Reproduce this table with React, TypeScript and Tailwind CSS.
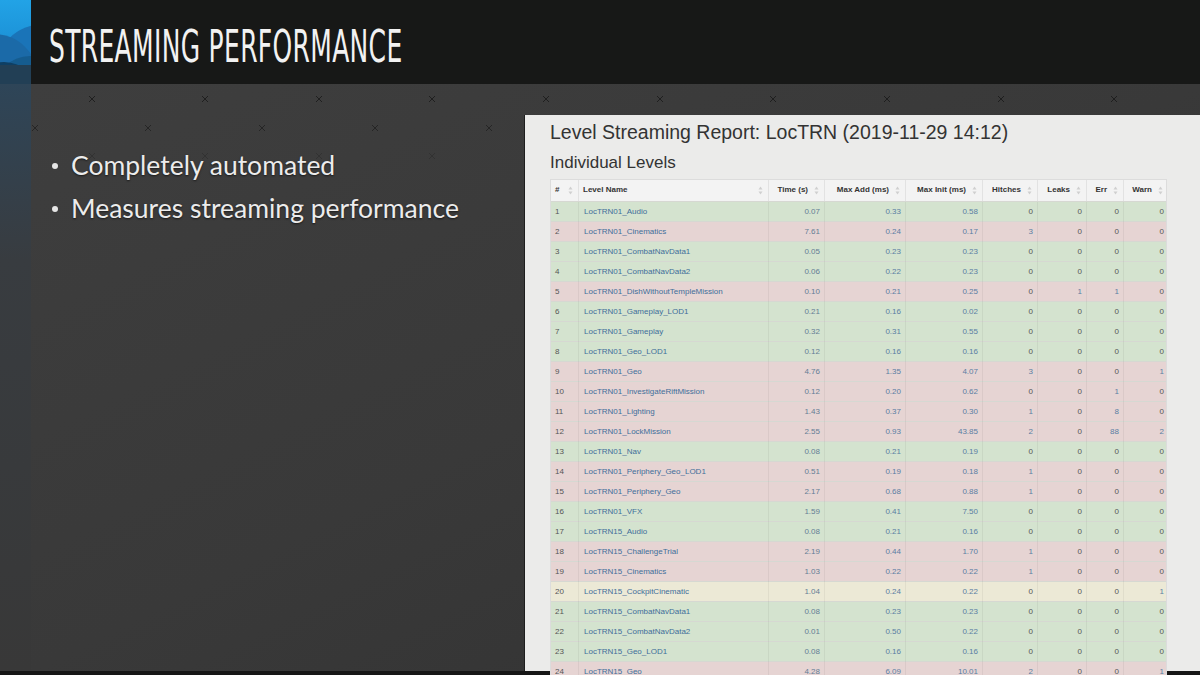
import React from 'react';

type Tone = 'g' | 'r' | 'y';
type Row = [string, string, string, string, number, number, number, number, Tone];

const ROWS: Row[] = [
  ['LocTRN01_Audio', '0.07', '0.33', '0.58', 0, 0, 0, 0, 'g'],
  ['LocTRN01_Cinematics', '7.61', '0.24', '0.17', 3, 0, 0, 0, 'r'],
  ['LocTRN01_CombatNavData1', '0.05', '0.23', '0.23', 0, 0, 0, 0, 'g'],
  ['LocTRN01_CombatNavData2', '0.06', '0.22', '0.23', 0, 0, 0, 0, 'g'],
  ['LocTRN01_DishWithoutTempleMission', '0.10', '0.21', '0.25', 0, 1, 1, 0, 'r'],
  ['LocTRN01_Gameplay_LOD1', '0.21', '0.16', '0.02', 0, 0, 0, 0, 'g'],
  ['LocTRN01_Gameplay', '0.32', '0.31', '0.55', 0, 0, 0, 0, 'g'],
  ['LocTRN01_Geo_LOD1', '0.12', '0.16', '0.16', 0, 0, 0, 0, 'g'],
  ['LocTRN01_Geo', '4.76', '1.35', '4.07', 3, 0, 0, 1, 'r'],
  ['LocTRN01_InvestigateRiftMission', '0.12', '0.20', '0.62', 0, 0, 1, 0, 'r'],
  ['LocTRN01_Lighting', '1.43', '0.37', '0.30', 1, 0, 8, 0, 'r'],
  ['LocTRN01_LockMission', '2.55', '0.93', '43.85', 2, 0, 88, 2, 'r'],
  ['LocTRN01_Nav', '0.08', '0.21', '0.19', 0, 0, 0, 0, 'g'],
  ['LocTRN01_Periphery_Geo_LOD1', '0.51', '0.19', '0.18', 1, 0, 0, 0, 'r'],
  ['LocTRN01_Periphery_Geo', '2.17', '0.68', '0.88', 1, 0, 0, 0, 'r'],
  ['LocTRN01_VFX', '1.59', '0.41', '7.50', 0, 0, 0, 0, 'g'],
  ['LocTRN15_Audio', '0.08', '0.21', '0.16', 0, 0, 0, 0, 'g'],
  ['LocTRN15_ChallengeTrial', '2.19', '0.44', '1.70', 1, 0, 0, 0, 'r'],
  ['LocTRN15_Cinematics', '1.03', '0.22', '0.22', 1, 0, 0, 0, 'r'],
  ['LocTRN15_CockpitCinematic', '1.04', '0.24', '0.22', 0, 0, 0, 1, 'y'],
  ['LocTRN15_CombatNavData1', '0.08', '0.23', '0.23', 0, 0, 0, 0, 'g'],
  ['LocTRN15_CombatNavData2', '0.01', '0.50', '0.22', 0, 0, 0, 0, 'g'],
  ['LocTRN15_Geo_LOD1', '0.08', '0.16', '0.16', 0, 0, 0, 0, 'g'],
  ['LocTRN15_Geo', '4.28', '6.09', '10.01', 2, 0, 0, 1, 'r'],
];

const HEADERS = ['#', 'Level Name', 'Time (s)', 'Max Add (ms)', 'Max Init (ms)', 'Hitches', 'Leaks', 'Err', 'Warn'];

const TONE: Record<Tone, string> = {
  g: 'bg-[#d4e3cf]',
  r: 'bg-[#e6d4d3]',
  y: 'bg-[#ece9d6]',
};

const COLS = 'grid grid-cols-[28px_190px_56px_81px_77px_55px_49px_37px_44px]';

// × marks of the slide background: [x, y, opacity]
const MARKS: [number, number, number][] = [
  ...[92, 205, 319, 432, 546, 660, 773, 887, 1001, 1114].map((x) => [x, 99, 0.9] as [number, number, number]),
  ...[35, 148, 262, 375, 489, 603, 716, 830, 944, 1057, 1171].map((x) => [x, 128, 0.7] as [number, number, number]),
  ...[92, 205, 319, 432].map((x) => [x, 156, 0.3] as [number, number, number]),
];

const Mark = ({ x, y, o }: { x: number; y: number; o: number }) => (
  <svg
    width="8"
    height="8"
    viewBox="0 0 8 8"
    className="absolute pointer-events-none"
    style={{ left: x - 4, top: y - 4, opacity: o }}
  >
    <path d="M1 1 L7 7 M7 1 L1 7" stroke="#1c1c1c" strokeWidth="1" />
  </svg>
);

const SortIcon = () => (
  <svg width="5" height="9" viewBox="0 0 5 9" className="absolute right-[5px] top-[6px]">
    <path d="M2.5 0.5 L4.5 3.5 H0.5 Z" fill="#cfcfcf" />
    <path d="M2.5 8.5 L4.5 5.5 H0.5 Z" fill="#cfcfcf" />
  </svg>
);

const StripLogo = () => (
  <svg width="31" height="84" viewBox="0 0 31 84" className="shrink-0 block">
    <defs>
      <linearGradient id="sky" x1="0" y1="0" x2="0" y2="1">
        <stop offset="0" stopColor="#22a3e6" />
        <stop offset="1" stopColor="#1680c8" />
      </linearGradient>
    </defs>
    <rect width="31" height="84" fill="url(#sky)" />
    <circle cx="44" cy="74" r="50" fill="#1a74b8" />
    <circle cx="-6" cy="78" r="44" fill="#1b6aa8" />
    <circle cx="30" cy="92" r="36" fill="#155c8f" />
    <circle cx="4" cy="96" r="34" fill="#0f3f63" />
    <rect y="65" width="31" height="19" fill="#223f55" />
  </svg>
);

const num = (v: number) => (v === 0 ? 'text-[#555]' : 'text-[#5a7ea3]');

export default function App() {
  return (
    <div className="w-[1200px] h-[675px] overflow-hidden flex flex-col bg-[#151515] font-['Liberation_Sans',Arial,sans-serif]">
      <div className="relative flex h-[671px] shrink-0">
        {/* blue strip on the left */}
        <div className="w-[31px] shrink-0 flex flex-col">
          <StripLogo />
          <div className="flex-1 bg-gradient-to-b from-[#2e4558] via-[#383c40] via-30% to-[#383838]" />
        </div>

        <div className="flex-1 min-h-0 flex flex-col">
          <div className="h-[84px] shrink-0 bg-[#171817] flex items-center pl-[18px] pt-[10px]">
            <h1 className="origin-left scale-x-[0.632] text-[44px] leading-none text-[#f2f2f2] tracking-[0.5px] font-['Liberation_Sans_Narrow','DejaVu_Sans_Condensed',sans-serif] whitespace-nowrap">
              STREAMING PERFORMANCE
            </h1>
          </div>

          <div className="flex-1 min-h-0 flex bg-gradient-to-br from-[#3e3e3e] via-[#393939] to-[#313131]">
            <ul className="w-[493px] shrink-0 pt-[67px] pl-[21px] flex flex-col gap-[14px] text-[26.5px] leading-[29px] text-[#ececec] font-['Lato','Noto_Sans',sans-serif] [text-shadow:0_1px_2px_rgba(0,0,0,0.6)]">
              <li className="flex items-center gap-[13px]">
                <span className="w-[6px] h-[6px] rounded-full bg-[#e6e6e6]" />
                <span>Completely automated</span>
              </li>
              <li className="flex items-center gap-[13px]">
                <span className="w-[6px] h-[6px] rounded-full bg-[#e6e6e6]" />
                <span>Measures streaming performance</span>
              </li>
            </ul>

            {/* captured report page */}
            <div className="relative z-10 flex-1 mt-[31px] bg-[#ebebea] border-l border-[#1e1e1e] pl-[25px] pt-[6px] text-[#333]">
              <div className="text-[19.5px] leading-[22px] whitespace-nowrap">Level Streaming Report: LocTRN (2019-11-29 14:12)</div>
              <div className="mt-[10px] text-[17px] leading-[20px]">Individual Levels</div>

              <div className="mt-[6px] w-[617px] border border-[#dcdcdc]">
                <div className={`${COLS} h-[21px] bg-[#f3f3f3] text-[8px] font-bold text-[#333] leading-[20px]`}>
                  {HEADERS.map((h, i) => (
                    <div
                      key={h}
                      className={`relative border-r border-[#e2e2e2] last:border-r-0 ${i < 2 ? 'pl-[4px] text-left' : 'pr-[16px] text-right'}`}
                    >
                      {h}
                      <SortIcon />
                    </div>
                  ))}
                </div>
                {ROWS.map((r, idx) => (
                  <div key={r[0]} className={`${COLS} h-[20px] leading-[20px] text-[8px] border-t border-[#d6d8d2] ${TONE[r[8]]}`}>
                    <div className="pl-[4px] text-[#555] border-r border-black/5">{idx + 1}</div>
                    <div className="pl-[5px] text-[#3f6e9a] border-r border-black/5 whitespace-nowrap">{r[0]}</div>
                    <div className="pr-[4px] text-right text-[#647d95] border-r border-black/5">{r[1]}</div>
                    <div className="pr-[4px] text-right text-[#5a7ea3] border-r border-black/5">{r[2]}</div>
                    <div className="pr-[4px] text-right text-[#5a7ea3] border-r border-black/5">{r[3]}</div>
                    <div className={`pr-[4px] text-right border-r border-black/5 ${num(r[4])}`}>{r[4]}</div>
                    <div className={`pr-[4px] text-right border-r border-black/5 ${num(r[5])}`}>{r[5]}</div>
                    <div className={`pr-[4px] text-right border-r border-black/5 ${num(r[6])}`}>{r[6]}</div>
                    <div className={`pr-[4px] text-right ${num(r[7])}`}>{r[7]}</div>
                  </div>
                ))}
              </div>
            </div>
          </div>
        </div>

        {/* background × pattern */}
        {MARKS.map(([x, y, o], i) => (
          <Mark key={i} x={x} y={y} o={o} />
        ))}
      </div>
      <div className="h-[4px] bg-[#161616]" />
    </div>
  );
}
